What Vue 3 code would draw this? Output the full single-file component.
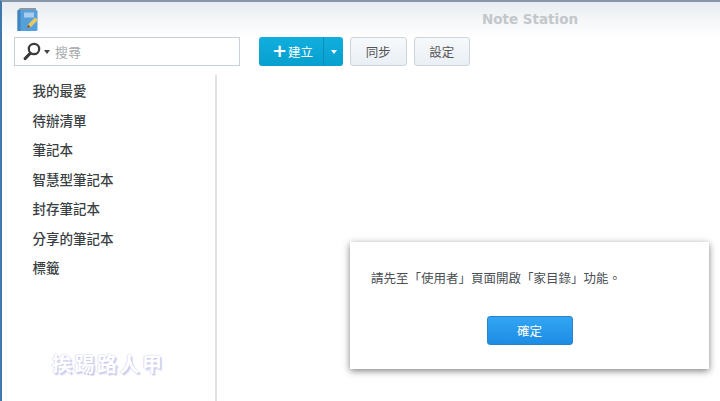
<script setup>
const items = ['我的最愛', '待辦清單', '筆記本', '智慧型筆記本', '封存筆記本', '分享的筆記本', '標籤']
</script>

<template>
  <div class="win">
    <header class="titlebar">
      <svg class="logo" width="22" height="25" viewBox="0 0 22 25">
        <path d="M1 3 L3 1 H19 V3 H1Z" fill="#8a98a4" />
        <rect x="0.5" y="3" width="20" height="21" rx="1.5" fill="#55a0dc" />
        <rect x="0.5" y="3" width="3" height="21" fill="#3f84bc" />
        <rect x="7" y="5.5" width="10" height="5" fill="#a9cdea" />
        <path d="M10 21 L11 17.5 L18 10.5 L21 13 L14 20 Z" fill="#e8c766" />
        <path d="M10 21 L11 17.5 L13.5 20 Z" fill="#6b5a3a" />
      </svg>
      <span class="title">Note Station</span>
    </header>
    <div class="toolbar">
      <div class="search">
        <svg class="glass" width="18" height="19" viewBox="0 0 18 19">
          <circle cx="11" cy="7" r="5.2" fill="none" stroke="#3a3a3a" stroke-width="2.2" />
          <path d="M7 11.5 L2.2 16.5" stroke="#3a3a3a" stroke-width="3.2" stroke-linecap="round" />
        </svg>
        <span class="caret dark"></span>
        <span class="placeholder">搜尋</span>
      </div>
      <div class="create">
        <span class="create-main"><span class="plus">+</span>建立</span>
        <span class="create-drop"><span class="caret white"></span></span>
      </div>
      <button class="btn">同步</button>
      <button class="btn">設定</button>
    </div>
    <div class="body">
      <nav class="sidebar">
        <div v-for="item in items" :key="item" class="nav-item">{{ item }}</div>
        <div class="watermark">挨踢路人甲</div>
      </nav>
      <main class="content"></main>
    </div>
    <div class="dialog">
      <p class="msg">請先至「使用者」頁面開啟「家目錄」功能。</p>
      <button class="ok">確定</button>
    </div>
  </div>
</template>

<style>
html, body { margin: 0; background: #fff; overflow: hidden; }
</style>

<style scoped>
.win {
  position: relative;
  box-sizing: border-box;
  width: 720px;
  height: 401px;
  overflow: hidden;
  background: #fff;
  border-top: 2px solid #8797a8;
  border-left: 2px solid #3f78ad;
  font-family: "Noto Sans CJK TC", "Liberation Sans", sans-serif;
}
.titlebar {
  position: relative;
  height: 35px;
  display: flex;
  align-items: flex-start;
  justify-content: center;
  background: linear-gradient(#e9edf1, #ffffff);
}
.logo { position: absolute; left: 15px; top: 5px; }
.title {
  margin: 9px 0 0 338px;
  font: bold 13.5px "DejaVu Sans", sans-serif;
  color: #c3c7cb;
}
.toolbar {
  display: flex;
  align-items: flex-start;
  height: 38px;
  padding-left: 12px;
}
.search {
  box-sizing: border-box;
  width: 226px;
  height: 29px;
  display: flex;
  align-items: center;
  border: 1px solid #c9d0d6;
  background: #fff;
  padding-left: 8px;
}
.glass { flex: none; }
.caret {
  width: 0;
  height: 0;
  border-left: 3.5px solid transparent;
  border-right: 3.5px solid transparent;
  display: inline-block;
}
.caret.dark { border-top: 4px solid #444; margin: 1px 0 0 3px; }
.caret.white { border-top: 4px solid #fff; }
.placeholder { margin-left: 5px; font-size: 13px; color: #a5a9ad; }
.create {
  display: flex;
  height: 29px;
  margin-left: 19px;
  border-radius: 3px;
  overflow: hidden;
  background: linear-gradient(#10aede, #07a0cf);
  color: #fff;
  font-size: 12.5px;
}
.create-main {
  box-sizing: border-box;
  width: 65px;
  display: flex;
  align-items: center;
  padding-left: 13px;
  border-right: 1px solid #0a8fb9;
}
.plus {
  font: bold 18px/1 "DejaVu Sans", sans-serif;
  margin-right: 1px;
  margin-top: -2px;
}
.create-drop {
  width: 19px;
  display: flex;
  align-items: center;
  justify-content: center;
}
.btn {
  box-sizing: border-box;
  width: 56.5px;
  height: 29px;
  margin-left: 7px;
  padding: 0;
  border: 1px solid #ccd5dc;
  border-radius: 3px;
  background: linear-gradient(#f7f9fb, #e9eff5);
  color: #555;
  font-family: inherit;
  font-size: 12.5px;
}
.body { display: flex; height: 326px; }
.sidebar {
  position: relative;
  box-sizing: border-box;
  width: 215px;
  flex: none;
  border-right: 2px solid #dfe1e3;
  padding: 1px 0 0 30.5px;
}
.nav-item {
  height: 29.5px;
  line-height: 29.5px;
  font-size: 13.5px;
  font-weight: 500;
  color: #3a3f44;
}
.watermark {
  position: absolute;
  left: 50px;
  top: 274px;
  font-size: 20px;
  font-weight: 700;
  letter-spacing: 2.5px;
  white-space: nowrap;
  color: #fff;
  text-shadow: 1px 1px 0 #c9cbec, -1px 0 0 #e2e3f6, 0 -1px 0 #ecedfa, 2px 2px 1px #d6d8f2;
}
.content { flex: 1; }
.dialog {
  position: absolute;
  left: 348px;
  top: 240px;
  box-sizing: border-box;
  width: 359px;
  height: 127px;
  background: #fff;
  box-shadow: 0 2px 7px rgba(0, 0, 0, 0.5);
  padding: 27px 21px 0;
  display: flex;
  flex-direction: column;
  align-items: center;
}
.msg {
  align-self: flex-start;
  margin: 0;
  font-size: 12.5px;
  line-height: 18px;
  color: #4a4f54;
  white-space: nowrap;
}
.ok {
  box-sizing: border-box;
  width: 86px;
  height: 29px;
  margin-top: 29px;
  padding: 0;
  border: 1px solid #2a82c8;
  border-radius: 3px;
  background: linear-gradient(#33a5f3, #1c8de4);
  color: #fff;
  font-family: inherit;
  font-size: 12.5px;
}
</style>
